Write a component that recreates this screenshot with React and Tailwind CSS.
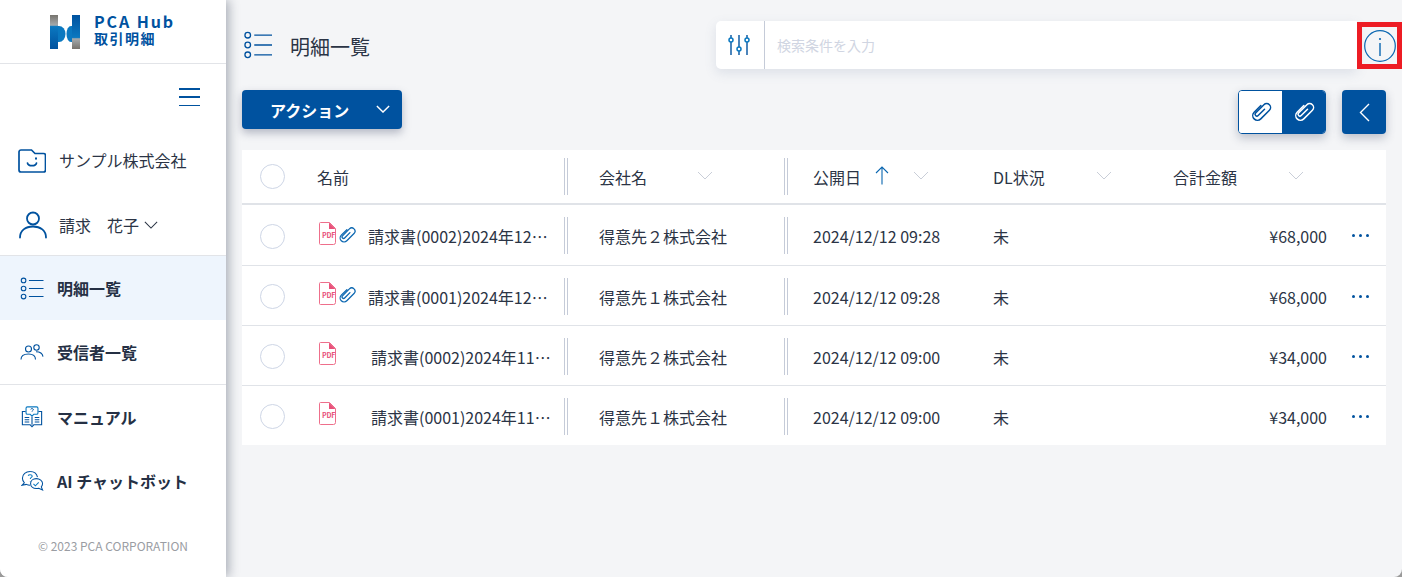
import React from 'react';

const font = { fontFamily: '"Noto Sans CJK JP", "Noto Sans", sans-serif' };

const rows = [
  { name: '請求書(0002)2024年12月分', clip: true, company: '得意先２株式会社', date: '2024/12/12 09:28', total: '¥68,000' },
  { name: '請求書(0001)2024年12月分', clip: true, company: '得意先１株式会社', date: '2024/12/12 09:28', total: '¥68,000' },
  { name: '請求書(0002)2024年11月分', clip: false, company: '得意先２株式会社', date: '2024/12/12 09:00', total: '¥34,000' },
  { name: '請求書(0001)2024年11月分', clip: false, company: '得意先１株式会社', date: '2024/12/12 09:00', total: '¥34,000' },
];

// 丸3つ + 横線のリストアイコン
const ListIcon = ({ className }) => (
  <svg viewBox="0 0 30 30" fill="none" stroke="#00529f" strokeWidth="1.4" className={className}>
    <circle cx="4" cy="4.5" r="3" />
    <circle cx="4" cy="15" r="3" />
    <circle cx="4" cy="25.5" r="3" />
    <path d="M11 4.5h19M11 15h19M11 25.5h19" />
  </svg>
);

const Logo = () => (
  <svg viewBox="0 0 30 34" className="w-[30px] h-[34px]">
    <defs>
      <linearGradient id="logoA" x1="0" y1="0" x2="0" y2="1">
        <stop offset="0" stopColor="#77736d" />
        <stop offset="0.3" stopColor="#a5aaac" />
        <stop offset="0.34" stopColor="#0a78c0" />
        <stop offset="1" stopColor="#00529f" />
      </linearGradient>
      <linearGradient id="logoB" x1="0" y1="0" x2="0" y2="1">
        <stop offset="0" stopColor="#00529f" />
        <stop offset="0.66" stopColor="#0a78c0" />
        <stop offset="0.7" stopColor="#a5aaac" />
        <stop offset="1" stopColor="#77736d" />
      </linearGradient>
    </defs>
    <path d="M0 0h8v34H0z" fill="url(#logoA)" />
    <path d="M8 11h1a6.500 8 0 0 1 0 16H8z" fill="#0a78c0" />
    <path d="M22 0h8v34h-8z" fill="url(#logoB)" />
    <path d="M22 11h-1a4.500 8 0 0 0 0 16h1z" fill="#0a78c0" />
  </svg>
);

const FolderIcon = () => (
  <svg viewBox="0 0 28 24" fill="none" stroke="#00529f" strokeWidth="1.7" className="w-[28px] h-[24px] shrink-0">
    <path d="M1 3a2 2 0 0 1 2-2h10.500l3.500 3.500h8.500a2 2 0 0 1 2 2V21a2 2 0 0 1-2 2H3a2 2 0 0 1-2-2z" />
    <path d="M9.500 14c.8 3.600 8.200 3.600 9 0" strokeLinecap="round" />
    <path d="M18 9.300v.4" strokeLinecap="round" strokeWidth="2" />
  </svg>
);

const UserIcon = () => (
  <svg viewBox="0 0 30 30" fill="none" stroke="#00529f" strokeWidth="1.8" className="w-[30px] h-[30px]">
    <circle cx="15" cy="8.500" r="6" />
    <path d="M2 27.500c0-7 5.500-11 13-11s13 4 13 11" strokeLinecap="round" />
  </svg>
);

const UsersIcon = () => (
  <svg viewBox="0 0 24 18" fill="none" stroke="#00529f" strokeWidth="1.1" className="w-6 h-[18px]">
    <circle cx="8.500" cy="6" r="3" />
    <circle cx="16.500" cy="4.500" r="2.700" />
    <path d="M1 16.500c0-3.500 3-5.500 7.500-5.500s7 2 7 5.500" />
    <path d="M16 8.700c3.500 0 6.500 1.700 7 5" />
  </svg>
);

const BookIcon = () => (
  <svg viewBox="0 0 24 24" fill="none" stroke="#00529f" strokeWidth="1.2" className="w-[22px] h-[22px]">
    <path d="M7 1h10a1.500 1.500 0 0 1 1.500 1.500v5a1.500 1.500 0 0 1-1.500 1.500h-3l-2 2-2-2H7a1.500 1.500 0 0 1-1.500-1.500v-5A1.500 1.500 0 0 1 7 1z" stroke="#0a78c0" />
    <path d="M5 6H1.500v14.500H10l2 2 2-2h8.500V6H19" />
    <path d="M12 11.500v9M4 12.500h5M4 15h5M4 17.500h5M15 12.500h5M15 15h5M15 17.500h5" />
    <path d="M10.400 3.700c.3-1.100 3-1.100 3.200.2.100 1-1.600 1-1.600 2.200" strokeWidth="1" />
  </svg>
);

const ChatIcon = () => (
  <svg viewBox="0 0 24 24" fill="none" stroke="#00529f" strokeWidth="1.1" className="w-[23px] h-[23px]">
    <path d="M9.500 1.500c-4.500 0-8 2.800-8 7 0 2 .8 3.500 2 4.800L1 16l4.500-1c1.200.6 2.500.9 4 .9" />
    <path d="M9.500 1.500c4 0 7 2.500 7.700 6" />
    <path d="M7.500 6c.4-1.500 4-1.500 4.200.3.100 1.300-2 1.500-2 3" stroke="#0a78c0" />
    <path d="M9.700 11.500v.6" stroke="#0a78c0" />
    <path d="M16 9c-3.600 0-6 2.300-6 5.200s2.500 5.200 6 5.200c1 0 1.800-.2 2.500-.4l4 1.900-1.300-3.300c.8-.9 1.300-2.100 1.300-3.400C22.500 11.300 19.600 9 16 9z" />
    <path d="M13 14.500l2 2 3.500-3.500" stroke="#0a78c0" />
  </svg>
);

const PdfIcon = () => (
  <div className="relative w-[17px] h-[23px]">
    <svg viewBox="0 0 17 23" fill="none" className="w-[17px] h-[23px]">
      <path d="M1.500.5h9l6 6v14a2 2 0 0 1-2 2h-13a1 1 0 0 1-1-1V1.500a1 1 0 0 1 1-1z" stroke="#ee6f8b" strokeWidth="1" fill="#fff" />
      <path d="M10 .5l6.500 6.500H10z" fill="#e8517a" />
    </svg>
    <span className="absolute left-[3px] top-[9px] text-[7px] leading-[9px] font-bold text-[#e8517a] tracking-[-0.2px]">PDF</span>
  </div>
);

// 右上がりのクリップ
const Clip = ({ className }) => (
  <svg viewBox="0 0 24 24" fill="none" stroke="currentColor" strokeWidth="1.5" strokeLinecap="round" className={className}>
    <path transform="rotate(45 12 12)" d="M12.500 7.500v9a1.800 1.800 0 0 1-3.600 0V4.800a3.900 3.900 0 0 1 7.800 0V17a4.700 4.700 0 0 1-9.400 0V7.500" />
  </svg>
);

const Chevron = ({ className, stroke = 'currentColor', width = 1 }) => (
  <svg viewBox="0 0 16 9" fill="none" stroke={stroke} strokeWidth={width} className={className}>
    <path d="M1 1l7 7 7-7" />
  </svg>
);

const Divider = () => (
  <div className="w-[4px] h-[37px] border-x border-[#c5cbd8] shrink-0 -mt-[1px]" />
);

const MutedChevron = () => <Chevron stroke="#c9ced8" className="w-[16px] h-[9px] -mt-[3px]" />;

const NavItem = ({ icon, label, active }) => (
  <div className={`flex items-center h-[64px] pl-[20px] gap-[13px] ${active ? 'bg-[#eef5fd]' : ''}`}>
    <div className="w-[24px] flex justify-center">{icon}</div>
    <span className="text-[16px] font-bold text-[#253044]">{label}</span>
  </div>
);

const App = () => {
  return (
    <div className="w-[1402px] h-[577px] bg-[#9a9a9a]">
      <div style={font} className="w-full h-full flex overflow-hidden bg-[#f4f5f7] text-[#2b3445] rounded-b-[8px]">
        {/* サイドバー */}
        <aside className="w-[226px] shrink-0 bg-white shadow-[3px_0_10px_rgba(60,70,90,0.4)] flex flex-col">
          <div className="h-[64px] border-b border-[#e2e4e8] flex items-center pl-[50px] gap-[14px]">
            <Logo />
            <div className="flex flex-col text-[#00529f] font-bold pb-[4px]">
              <span className="text-[16px] leading-[17px] tracking-[1.9px] whitespace-nowrap">PCA Hub</span>
              <span className="text-[14px] leading-[17px] tracking-[1.5px] whitespace-nowrap">取引明細</span>
            </div>
          </div>
          <div className="h-[64px] flex justify-end items-start pt-[24px] pr-[26px]">
            <div className="w-[21px] h-[18px] flex flex-col justify-between">
              <div className="h-[1.5px] bg-[#00529f]" />
              <div className="h-[1.5px] bg-[#00529f]" />
              <div className="h-[1.5px] bg-[#00529f]" />
            </div>
          </div>
          <div className="h-[66px] flex items-center pl-[18px] gap-[13px]">
            <FolderIcon />
            <span className="text-[16px] -mt-[2px]">サンプル株式会社</span>
          </div>
          <div className="h-[61px] flex items-center pl-[18px] gap-[11px]">
            <UserIcon />
            <span className="text-[16px]">請求　花子</span>
            <Chevron width={1.2} className="w-[14px] h-[8px] -ml-[6px]" />
          </div>
          <div className="border-t border-[#e2e4e8]">
            <NavItem active icon={<ListIcon className="w-[24px] h-[23px]" />} label="明細一覧" />
            <NavItem icon={<UsersIcon />} label="受信者一覧" />
          </div>
          <div className="border-t border-[#e2e4e8]">
            <NavItem icon={<BookIcon />} label="マニュアル" />
            <NavItem icon={<ChatIcon />} label="AI チャットボット" />
          </div>
          <div className="text-center text-[12px] text-[#9a9da3] mt-[24px]">© 2023 PCA CORPORATION</div>
        </aside>

        {/* メイン */}
        <main className="flex-1 flex flex-col">
          <div className="flex h-[90px] pt-[21px] pl-[17px]">
            <div className="flex items-start gap-[17px] w-[473px] pt-[10px]">
              <ListIcon className="w-[30px] h-[28px]" />
              <span className="text-[20px] leading-[30px] pt-[1px]">明細一覧</span>
            </div>
            <div className="w-[641px] h-[48px] bg-white rounded-l-[5px] shadow-[0_4px_12px_rgba(90,105,150,0.15)] flex items-center">
              <div className="w-[49px] h-full border-r border-[#c5cbd8] flex items-center justify-center pr-[2px]">
                <svg viewBox="0 0 22 22" fill="none" className="w-[22px] h-[22px]">
                  <path d="M3 1v20M11 1v20M19 1v20" stroke="#00529f" strokeWidth="1.400" />
                  <circle cx="3" cy="6" r="2" fill="#fff" stroke="#0a78c0" strokeWidth="1.500" />
                  <circle cx="11" cy="15" r="2" fill="#fff" stroke="#0a78c0" strokeWidth="1.500" />
                  <circle cx="19" cy="6" r="2" fill="#fff" stroke="#0a78c0" strokeWidth="1.500" />
                </svg>
              </div>
              <span className="pl-[12px] pt-[1px] text-[14px] text-[#d0d5e2]">検索条件を入力</span>
            </div>
            <div className="w-[45px] h-[47px] mt-[1px] border-[5px] border-[#ed1c24] flex items-center justify-center">
              <svg viewBox="0 0 32 32" fill="none" className="w-[32px] h-[32px] shrink-0">
                <circle cx="16" cy="16" r="15.300" stroke="#0a66b0" strokeWidth="1.200" />
                <path d="M16 13v13" stroke="#0a66b0" strokeWidth="1.400" />
                <circle cx="16" cy="9" r="1.100" fill="#0a66b0" />
              </svg>
            </div>
          </div>

          <div className="flex items-start h-[60px] pl-[16px] pr-[16px]">
            <button className="w-[160px] h-[39px] bg-[#00529f] rounded-[4px] text-white flex items-center shadow-[0_4px_8px_rgba(60,70,100,0.35)]">
              <span className="pl-[28px] w-[134px] text-left text-[16px] font-bold pt-[1px]">アクション</span>
              <Chevron width={1.6} className="w-[14px] h-[8px] -mt-[1px]" />
            </button>
            <div className="ml-auto flex gap-[16px]">
              <div className="flex w-[88px] h-[44px] rounded-[4px] overflow-hidden border border-[#00529f] shadow-[0_4px_10px_rgba(60,70,100,0.3)]">
                <div className="w-[43px] bg-white flex items-center justify-center">
                  <Clip className="w-[24px] h-[24px] text-[#00529f]" />
                </div>
                <div className="flex-1 bg-[#00529f] flex items-center justify-center">
                  <Clip className="w-[24px] h-[24px] text-white" />
                </div>
              </div>
              <div className="w-[44px] h-[44px] rounded-[4px] bg-[#00529f] flex items-center justify-center shadow-[0_4px_10px_rgba(60,70,100,0.3)]">
                <svg viewBox="0 0 11 19" fill="none" stroke="#fff" strokeWidth="1.400" className="w-[11px] h-[19px]">
                  <path d="M10 1L1.500 9.500 10 18" />
                </svg>
              </div>
            </div>
          </div>

          {/* 一覧テーブル */}
          <div className="mx-[16px] bg-white text-[16px]">
            <div className="flex items-center h-[55px] border-b-[2px] border-[#e0e3e8]">
              <div className="w-[322px] flex items-center pl-[18px]">
                <div className="w-[25px] h-[25px] rounded-full border-[1.5px] border-[#ced6e6]" />
                <span className="ml-[32px]">名前</span>
              </div>
              <Divider />
              <div className="w-[216px] flex items-center pl-[31px]">
                <span className="w-[98px]">会社名</span>
                <MutedChevron />
              </div>
              <Divider />
              <div className="w-[205px] flex items-center pl-[25px]">
                <span className="w-[62px]">公開日</span>
                <svg viewBox="0 0 14 19" fill="none" stroke="#0a66b0" strokeWidth="1.100" className="w-[14px] h-[19px] -mt-[3px]">
                  <path d="M7 18.500V1M1 7l6-6 6 6" />
                </svg>
                <div className="ml-[24px] flex"><MutedChevron /></div>
              </div>
              <div className="w-[180px] flex items-center">
                <span className="w-[103px]">DL状況</span>
                <MutedChevron />
              </div>
              <div className="flex items-center">
                <span className="w-[115px]">合計金額</span>
                <MutedChevron />
              </div>
            </div>
            {rows.map((row, i) => (
              <div key={i} className={`flex items-center pt-[2px] ${i === 0 ? 'h-[61px]' : i === 3 ? 'h-[59px]' : 'h-[60px]'} ${i < 3 ? 'border-b border-[#e0e3e8]' : ''}`}>
                <div className="w-[322px] flex items-center pl-[18px]">
                  <div className="w-[25px] h-[25px] rounded-full border-[1.5px] border-[#ced6e6] shrink-0" />
                  <div className="ml-[34px] -mt-[6px] shrink-0"><PdfIcon /></div>
                  <div className="w-[21px] shrink-0 flex justify-end -mt-[3px]">
                    {row.clip && <Clip className="w-[20px] h-[20px] text-[#0a66b0]" />}
                  </div>
                  <span className={`truncate ${row.clip ? 'ml-[11px] w-[181px]' : 'ml-[14px] w-[180px]'}`}>{row.name}</span>
                </div>
                <Divider />
                <div className="w-[216px] pl-[31px]">{row.company}</div>
                <Divider />
                <div className="w-[205px] pl-[25px]">{row.date}</div>
                <div className="w-[334px] flex justify-between">
                  <span>未</span>
                  <span>{row.total}</span>
                </div>
                <div className="ml-[25px] flex gap-[4px] -mt-[1px]">
                  <div className="w-[3px] h-[3px] rounded-full bg-[#00529f]" />
                  <div className="w-[3px] h-[3px] rounded-full bg-[#00529f]" />
                  <div className="w-[3px] h-[3px] rounded-full bg-[#00529f]" />
                </div>
              </div>
            ))}
          </div>
        </main>
      </div>
    </div>
  );
};

export default App;
